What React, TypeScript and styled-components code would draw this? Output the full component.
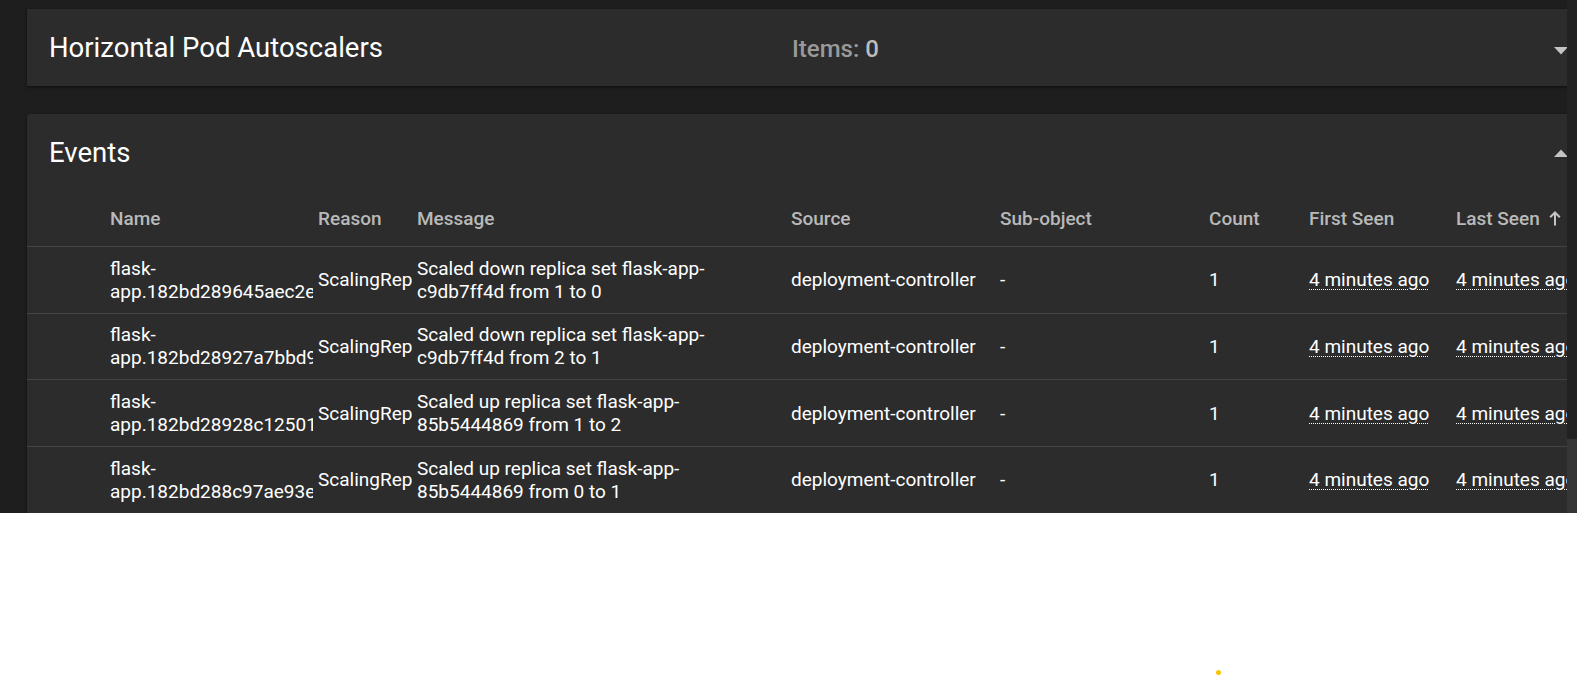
import React from 'react';
import styled, { createGlobalStyle } from 'styled-components';

const GlobalStyle = createGlobalStyle`
  body {
    margin: 0;
    background: #ffffff;
    font-family: Roboto, "Noto Sans", "Liberation Sans", sans-serif;
  }
`;

interface EventRow {
  name: string;
  reason: string;
  message: string;
  source: string;
  subObject: string;
  count: number;
  firstSeen: string;
  lastSeen: string;
}

const events: EventRow[] = [
  {
    name: 'flask-app.182bd289645aec2e4f1a',
    reason: 'ScalingReplicaSet',
    message: 'Scaled down replica set flask-app-c9db7ff4d from 1 to 0',
    source: 'deployment-controller',
    subObject: '-',
    count: 1,
    firstSeen: '4 minutes ago',
    lastSeen: '4 minutes ago',
  },
  {
    name: 'flask-app.182bd28927a7bbd9c3e0',
    reason: 'ScalingReplicaSet',
    message: 'Scaled down replica set flask-app-c9db7ff4d from 2 to 1',
    source: 'deployment-controller',
    subObject: '-',
    count: 1,
    firstSeen: '4 minutes ago',
    lastSeen: '4 minutes ago',
  },
  {
    name: 'flask-app.182bd28928c125017ab2',
    reason: 'ScalingReplicaSet',
    message: 'Scaled up replica set flask-app-85b5444869 from 1 to 2',
    source: 'deployment-controller',
    subObject: '-',
    count: 1,
    firstSeen: '4 minutes ago',
    lastSeen: '4 minutes ago',
  },
  {
    name: 'flask-app.182bd288c97ae93e11d8',
    reason: 'ScalingReplicaSet',
    message: 'Scaled up replica set flask-app-85b5444869 from 0 to 1',
    source: 'deployment-controller',
    subObject: '-',
    count: 1,
    firstSeen: '4 minutes ago',
    lastSeen: '4 minutes ago',
  },
];

const columns = '78px 203px 94px 369px 204px 204px 95px 142px 1fr';

const Viewport = styled.div`
  height: 513px;
  display: flex;
  background: #1e1e1e;
  overflow: hidden;
`;

const ScrollArea = styled.div`
  flex: 1;
  overflow: hidden;
  padding-top: 9px;
`;

const Content = styled.div`
  width: 1600px;
  padding: 0 27px;
  box-sizing: border-box;
  display: flex;
  flex-direction: column;
  gap: 28px;
`;

const Panel = styled.section<{ $rounded?: boolean }>`
  background: #2c2c2c;
  border-radius: ${p => (p.$rounded ? '4px 4px 0 0' : '0')};
  box-shadow: 0 1px 3px rgba(0, 0, 0, 0.55);
`;

const PanelHeader = styled.div`
  height: 77px;
  display: grid;
  grid-template-columns: 765px 1fr auto;
  align-items: center;
  padding-right: 5px;
`;

const Title = styled.h2`
  margin: 0;
  padding-left: 22px;
  font-size: 27.5px;
  font-weight: 400;
  color: #ffffff;
`;

const Items = styled.div`
  font-size: 24px;
  font-weight: 500;
  color: #9a9a9a;
  margin-top: 3px;

  b {
    font-weight: 500;
    color: #bcbcbc;
  }
`;

const Caret = styled.svg<{ $up?: boolean }>`
  width: 14px;
  height: 8px;
  margin-top: ${p => (p.$up ? '1px' : '6px')};
  transform: ${p => (p.$up ? 'rotate(180deg)' : 'none')};
`;

const Row = styled.div<{ $head?: boolean }>`
  display: grid;
  grid-template-columns: ${columns};
  column-gap: 5px;
  align-items: center;
  height: ${p => (p.$head ? '56px' : '66.67px')};
  box-sizing: border-box;
  border-bottom: 1px solid #444444;
  font-size: 19px;
  line-height: 23px;
  font-weight: ${p => (p.$head ? 500 : 400)};
  color: ${p => (p.$head ? '#b9b9b9' : '#ffffff')};
`;

const Cell = styled.div`
  overflow: hidden;
  white-space: nowrap;
`;

const NameCell = styled(Cell)`
  white-space: normal;
`;

const MessageCell = styled(Cell)`
  white-space: normal;
  padding-right: 16px;
`;

const SortHead = styled.div`
  display: flex;
  align-items: center;
  gap: 9px;
  white-space: nowrap;
`;

const TimeAgo = styled.span`
  text-decoration: underline dotted;
  text-underline-offset: 3px;
  text-decoration-thickness: 1px;
`;

const Scrollbar = styled.div`
  width: 10px;
  background: #222222;
  display: flex;
  flex-direction: column;
  justify-content: flex-end;
`;

const Thumb = styled.div`
  height: 74px;
  background: #363636;
`;

const Below = styled.div`
  height: 164px;
  padding: 157px 0 0 1216px;
  box-sizing: border-box;
`;

const Dot = styled.div`
  width: 5px;
  height: 5px;
  border-radius: 50%;
  background: #f7c600;
`;

function CaretIcon({ up }: { up?: boolean }) {
  return (
    <Caret $up={up} viewBox="0 0 14 8">
      <polygon points="0,0 14,0 7,7.5" fill="#c4c4c4" />
    </Caret>
  );
}

function ArrowUp() {
  return (
    <svg width="12" height="15" viewBox="0 0 12 15">
      <path d="M6 1.5 L6 14.5 M1.2 6.3 L6 1.5 L10.8 6.3" stroke="#c4c4c4" strokeWidth="2" fill="none" />
    </svg>
  );
}

export default function App(): React.ReactElement {
  return (
    <>
      <GlobalStyle />
      <Viewport>
        <ScrollArea>
          <Content>
            <Panel>
              <PanelHeader>
                <Title>Horizontal Pod Autoscalers</Title>
                <Items>
                  Items: <b>0</b>
                </Items>
                <CaretIcon />
              </PanelHeader>
            </Panel>
            <Panel $rounded>
              <PanelHeader>
                <Title>Events</Title>
                <div />
                <CaretIcon up />
              </PanelHeader>
              <Row $head>
                <div />
                <Cell>Name</Cell>
                <Cell>Reason</Cell>
                <Cell>Message</Cell>
                <Cell>Source</Cell>
                <Cell>Sub-object</Cell>
                <Cell>Count</Cell>
                <Cell>First Seen</Cell>
                <SortHead>
                  Last Seen <ArrowUp />
                </SortHead>
              </Row>
              {events.map(ev => (
                <Row key={ev.name}>
                  <div />
                  <NameCell>{ev.name}</NameCell>
                  <Cell>{ev.reason}</Cell>
                  <MessageCell>{ev.message}</MessageCell>
                  <Cell>{ev.source}</Cell>
                  <Cell>{ev.subObject}</Cell>
                  <Cell>{ev.count}</Cell>
                  <Cell>
                    <TimeAgo>{ev.firstSeen}</TimeAgo>
                  </Cell>
                  <Cell>
                    <TimeAgo>{ev.lastSeen}</TimeAgo>
                  </Cell>
                </Row>
              ))}
            </Panel>
          </Content>
        </ScrollArea>
        <Scrollbar>
          <Thumb />
        </Scrollbar>
      </Viewport>
      <Below>
        <Dot />
      </Below>
    </>
  );
}
